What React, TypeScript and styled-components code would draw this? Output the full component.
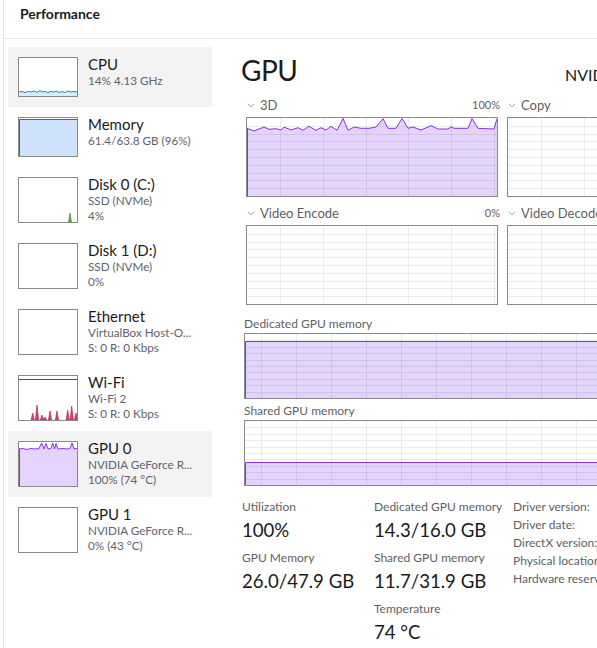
import styled, { createGlobalStyle } from 'styled-components';

const GlobalStyle = createGlobalStyle`
  html, body {
    margin: 0;
    background: #fff;
  }
  body {
    font-family: "Segoe UI", Lato, "Open Sans", sans-serif;
    color: #1b1b1b;
    overflow: hidden;
  }
`;

const PURPLE = '#8f2fe6';
const PURPLE_FILL = '#e4d3fc';
const GRID = 'rgba(0, 0, 0, 0.075)';

type Pt = [number, number];

function linePath (pts: Pt[]) {
  return pts.map((p, i) => `${i ? 'L' : 'M'}${p[0]} ${p[1]}`).join(' ');
}

function areaPath (pts: Pt[], bottom: number) {
  const last = pts[pts.length - 1];
  return `${linePath(pts)} L${last[0]} ${bottom} L${pts[0][0]} ${bottom} Z`;
}

const gpu3d: Pt[] = [
  [0, 10.3], [7, 13], [12, 11], [17, 9], [22, 11.3], [29, 10.7], [34, 12], [37, 9], [44, 12],
  [51, 9.7], [56, 12.3], [62, 8.3], [69, 12.3], [74, 9.7], [79, 12], [84, 8.3], [90, 12.3],
  [96, 0.5], [101, 12.3], [107, 9], [114, 10.3], [122, 10.3], [129, 9], [136, 0.7], [141, 10.3],
  [149, 10.3], [155, 0.5], [161, 10.3], [166, 9], [174, 12], [184, 7.7], [191, 11], [201, 11],
  [204, 8.7], [207, 10.3], [221, 10.3], [225, 0.7], [231, 10.3], [247, 11], [250, 0.7]
];

const gpuThumb: Pt[] = [
  [0, 7], [4, 6.5], [8, 7.5], [12, 6.5], [16, 7], [20, 6.5], [22.7, 1], [25, 7], [27, 1.5], [29, 7],
  [32, 6.5], [33.7, 1], [35.5, 7], [37, 1.5], [39, 7], [44, 6.5], [48, 7], [51, 6.5], [53, 1], [55, 7], [58, 6.5]
];

const cpuThumb: Pt[] = [
  [0, 34], [3, 33.5], [6, 34.5], [9, 33.5], [12, 34], [15, 33], [18, 34.5], [21, 32.5], [23, 34],
  [26, 33.5], [29, 34.5], [32, 33.5], [35, 34], [38, 33], [40, 34.5], [43, 33.5], [46, 34.5],
  [49, 33], [52, 34], [55, 33.5], [58, 34]
];

const wifiSpikes: Array<[number, number]> = [
  [13.7, 7], [18, 15], [23, 5], [26, 3], [31, 9], [38, 9], [48.7, 10], [52.7, 14], [57, 7]
];

function GridLines ({ w, h, rows, start, step }: { w: number, h: number, rows: number, start: number, step: number }) {
  const lines = [];
  for (let i = 1; i < rows; i++) {
    const y = Math.round((i * h) / rows) + 0.5;
    lines.push(<line key={`h${i}`} x1={0} x2={w} y1={y} y2={y} />);
  }
  for (let x = start; x < w; x += step) {
    const xx = Math.round(x) + 0.5;
    lines.push(<line key={`v${x}`} x1={xx} x2={xx} y1={0} y2={h} />);
  }
  return <g stroke={GRID} strokeWidth={1}>{lines}</g>;
}

function Chevron () {
  return (
    <ChevronIcon width='8' height='5' viewBox='0 0 8 5'>
      <polyline points='0.8,0.8 4,3.8 7.2,0.8' fill='none' stroke='#9a9a9a' strokeWidth='0.9' />
    </ChevronIcon>
  );
}

type ThumbKind = 'cpu' | 'memory' | 'disk0' | 'empty' | 'wifi' | 'gpu0';

function ThumbDrawing ({ kind, h }: { kind: ThumbKind, h: number }) {
  const w = 58;
  if (kind === 'cpu') {
    return (
      <svg width={w} height={h}>
        <path d={areaPath(cpuThumb, h)} fill='#d5eef8' />
        <path d={linePath(cpuThumb)} fill='none' stroke='#1d8fb8' strokeWidth='1' />
      </svg>
    );
  }
  if (kind === 'memory') {
    return (
      <svg width={w} height={h}>
        <rect x='0' y='1' width={w} height={h - 1} fill='#cde1fb' />
        <path d={`M0.5 ${h} L0.5 1.5 L${w} 1.5`} fill='none' stroke='#1a6fdc' strokeWidth='1' />
      </svg>
    );
  }
  if (kind === 'disk0') {
    return (
      <svg width={w} height={h}>
        <polygon points={`49.5,${h} 51,${h - 9} 52.5,${h}`} fill='#6fa83f' stroke='#4d8a26' strokeWidth='0.6' />
      </svg>
    );
  }
  if (kind === 'wifi') {
    return (
      <svg width={w} height={h}>
        <line x1='0' x2={w} y1='3.5' y2='3.5' stroke='#b3164d' strokeWidth='1' />
        {wifiSpikes.map(([x, sh]) => (
          <polygon key={x} points={`${x - 1.6},${h} ${x},${h - sh} ${x + 1.6},${h}`} fill='#d6407a' stroke='#b3164d' strokeWidth='0.6' />
        ))}
      </svg>
    );
  }
  if (kind === 'gpu0') {
    return (
      <svg width={w} height={h}>
        <path d={areaPath(gpuThumb, h)} fill={PURPLE_FILL} />
        <path d={`M0.5 ${h} L0.5 7 ${linePath(gpuThumb).replace('M', 'L')}`} fill='none' stroke={PURPLE} strokeWidth='1' />
      </svg>
    );
  }
  return <svg width={w} height={h} />;
}

interface Device {
  name: string
  lines: string[]
  kind: ThumbKind
  selected?: boolean
}

const devices: Device[] = [
  { name: 'CPU', lines: ['14%  4.13 GHz'], kind: 'cpu', selected: true },
  { name: 'Memory', lines: ['61.4/63.8 GB (96%)'], kind: 'memory' },
  { name: 'Disk 0 (C:)', lines: ['SSD (NVMe)', '4%'], kind: 'disk0' },
  { name: 'Disk 1 (D:)', lines: ['SSD (NVMe)', '0%'], kind: 'empty' },
  { name: 'Ethernet', lines: ['VirtualBox Host-O...', 'S: 0 R: 0 Kbps'], kind: 'empty' },
  { name: 'Wi-Fi', lines: ['Wi-Fi 2', 'S: 0 R: 0 Kbps'], kind: 'wifi' },
  { name: 'GPU 0', lines: ['NVIDIA GeForce R...', '100%  (74 °C)'], kind: 'gpu0', selected: true },
  { name: 'GPU 1', lines: ['NVIDIA GeForce R...', '0%  (43 °C)'], kind: 'empty' }
];

function EngineGraph ({ label, value, filled }: { label: string, value?: string, filled?: boolean }) {
  const w = 250;
  const h = 78;
  return (
    <GraphCell>
      <GraphHead>
        <Chevron />
        <span>{label}</span>
        {value && <HeadValue>{value}</HeadValue>}
      </GraphHead>
      <GraphBox $height={80}>
        <svg width={w} height={h}>
          {filled && <path d={areaPath(gpu3d, h)} fill={PURPLE_FILL} />}
          <GridLines w={w} h={h} rows={10} start={33} step={42.8} />
          {filled && <path d={`M0.5 ${h} L0.5 10.3 ${linePath(gpu3d).replace('M', 'L')}`} fill='none' stroke={PURPLE} strokeWidth='1' />}
        </svg>
      </GraphBox>
    </GraphCell>
  );
}

function MemoryGraph ({ label, level }: { label: string, level: number }) {
  const w = 400;
  const h = 64;
  return (
    <>
      <MemLabel>{label}</MemLabel>
      <MemBox>
        <svg width={w} height={h}>
          <rect x='0' y={level} width={w} height={h - level} fill={PURPLE_FILL} />
          <GridLines w={w} h={h} rows={10} start={16} step={35} />
          <path d={`M0.5 ${h} L0.5 ${level + 0.5} L${w} ${level + 0.5}`} fill='none' stroke={PURPLE} strokeWidth='1' />
        </svg>
      </MemBox>
    </>
  );
}

export default function App () {
  return (
    <Window>
      <GlobalStyle />

      <Header>Performance</Header>

      <Body>
        <Sidebar>
          {devices.map((d) => (
            <DeviceItem key={d.name} $selected={!!d.selected}>
              <Thumb>
                <ThumbDrawing kind={d.kind} h={d.lines.length > 1 ? 44 : 38} />
              </Thumb>
              <DeviceText>
                <DeviceName>{d.name}</DeviceName>
                {d.lines.map((l) => <DeviceSub key={l}>{l}</DeviceSub>)}
              </DeviceText>
            </DeviceItem>
          ))}
        </Sidebar>

        <Main>
          <TitleRow>
            <Title>GPU</Title>
            <AdapterName>NVIDIA GeForce RTX 4080</AdapterName>
          </TitleRow>

          <GraphGrid>
            <EngineGraph label='3D' value='100%' filled />
            <EngineGraph label='Copy' />
            <EngineGraph label='Video Encode' value='0%' />
            <EngineGraph label='Video Decode' />
          </GraphGrid>

          <MemorySection>
            <MemoryGraph label='Dedicated GPU memory' level={7} />
            <MemoryGraph label='Shared GPU memory' level={41} />
          </MemorySection>

          <Stats>
            <StatColumn>
              <StatLabel>Utilization</StatLabel>
              <StatValue>100%</StatValue>
              <StatLabel>GPU Memory</StatLabel>
              <StatValue>26.0/47.9 GB</StatValue>
            </StatColumn>
            <StatColumn>
              <StatLabel>Dedicated GPU memory</StatLabel>
              <StatValue>14.3/16.0 GB</StatValue>
              <StatLabel>Shared GPU memory</StatLabel>
              <StatValue>11.7/31.9 GB</StatValue>
              <StatLabel>Temperature</StatLabel>
              <StatValue>74 °C</StatValue>
            </StatColumn>
            <StatColumn>
              <InfoLine>Driver version:</InfoLine>
              <InfoLine>Driver date:</InfoLine>
              <InfoLine>DirectX version:</InfoLine>
              <InfoLine>Physical location:</InfoLine>
              <InfoLine>Hardware reserved memory:</InfoLine>
            </StatColumn>
          </Stats>
        </Main>
      </Body>
    </Window>
  );
}

const Window = styled.div`
  width: 594px;
  height: 648px;
  margin-left: 3px;
  border-left: 1px solid #e6e6e6;
  overflow: hidden;
  background: #fff;
`;

const Header = styled.div`
  height: 38px;
  line-height: 28px;
  padding-left: 16px;
  font-size: 14px;
  font-weight: 700;
  color: #1b1b1b;
  border-bottom: 1px solid #e8e8e8;
`;

const Body = styled.div`
  display: flex;
  align-items: flex-start;
`;

const Sidebar = styled.nav`
  flex: 0 0 204px;
  padding: 8px 0 0 4px;
  display: flex;
  flex-direction: column;
`;

const DeviceItem = styled.div<{ $selected: boolean }>`
  display: flex;
  align-items: flex-start;
  gap: 10px;
  padding: 10px;
  background: ${(p) => (p.$selected ? '#f3f3f3' : 'transparent')};
`;

const Thumb = styled.div`
  border: 1px solid #8a8a8a;
  background: #fff;
  line-height: 0;

  svg {
    display: block;
  }
`;

const DeviceText = styled.div`
  display: flex;
  flex-direction: column;
  margin-top: -2px;
  white-space: nowrap;
`;

const DeviceName = styled.span`
  font-size: 15px;
  line-height: 18px;
  color: #1b1b1b;
`;

const DeviceSub = styled.span`
  font-size: 11.7px;
  line-height: 15px;
  color: #62626e;
`;

const Main = styled.main`
  flex: 1;
  min-width: 0;
  padding-left: 32px;
`;

const TitleRow = styled.div`
  display: grid;
  grid-template-columns: 321px max-content;
  align-items: baseline;
  margin-top: 13px;
  white-space: nowrap;
`;

const Title = styled.h1`
  margin: 0 0 0 -3px;
  font-size: 28px;
  line-height: 36px;
  font-weight: 400;
  letter-spacing: -0.5px;
`;

const AdapterName = styled.span`
  font-size: 16px;
`;

const GraphGrid = styled.div`
  display: grid;
  grid-template-columns: 252px 252px;
  column-gap: 9px;
  row-gap: 7px;
  margin: 8px 0 0 2px;
`;

const GraphCell = styled.div`
  display: flex;
  flex-direction: column;
  gap: 4px;
  min-width: 0;
`;

const GraphHead = styled.div`
  display: flex;
  align-items: center;
  gap: 5px;
  height: 17px;
  padding-left: 1px;
  font-size: 13px;
  color: #5f5f5f;
  white-space: nowrap;
`;

const ChevronIcon = styled.svg`
  flex: none;
  margin-top: 1px;
`;

const HeadValue = styled.span`
  margin-left: auto;
  margin-right: -2px;
  font-size: 11px;
`;

const GraphBox = styled.div<{ $height: number }>`
  height: ${(p) => p.$height - 2}px;
  border: 1px solid #8a8a8a;
  overflow: hidden;

  svg {
    display: block;
  }
`;

const MemorySection = styled.div`
  margin-top: 11px;
  display: flex;
  flex-direction: column;
`;

const MemLabel = styled.div`
  font-size: 12px;
  line-height: 16px;
  color: #5f5f5f;
  margin-top: 4px;

  &:first-child {
    margin-top: 0;
  }
`;

const MemBox = styled.div`
  width: 400px;
  height: 64px;
  margin-top: 1px;
  border: 1px solid #8a8a8a;
  border-right: none;

  svg {
    display: block;
  }
`;

const Stats = styled.div`
  display: grid;
  grid-template-columns: 132px 139px max-content;
  margin: 12px 0 0 -2px;
  white-space: nowrap;
`;

const StatColumn = styled.div`
  display: flex;
  flex-direction: column;
`;

const StatLabel = styled.div`
  font-size: 12px;
  line-height: 18px;
  color: #5f5f5f;
`;

const StatValue = styled.div`
  font-size: 18.6px;
  line-height: 28px;
  margin-bottom: 5px;
  color: #1b1b1b;
`;

const InfoLine = styled.div`
  font-size: 12px;
  line-height: 18px;
  color: #5f5f5f;
`;
